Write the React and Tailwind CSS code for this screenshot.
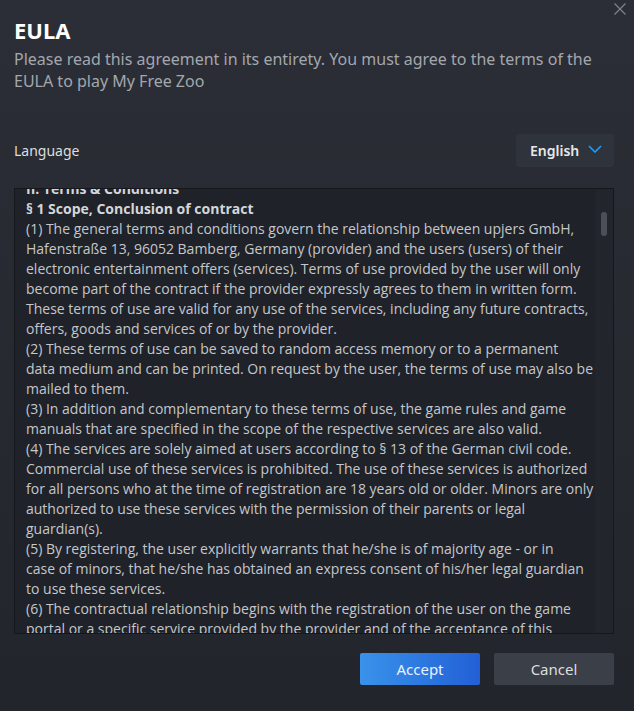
const TERMS = [
  { bold: true, lines: ['II. Terms & Conditions'] },
  { bold: true, lines: ['§ 1 Scope, Conclusion of contract'] },
  {
    lines: [
      '(1) The general terms and conditions govern the relationship between upjers GmbH,',
      'Hafenstraße 13, 96052 Bamberg, Germany (provider) and the users (users) of their',
      'electronic entertainment offers (services). Terms of use provided by the user will only',
      'become part of the contract if the provider expressly agrees to them in written form.',
      'These terms of use are valid for any use of the services, including any future contracts,',
      'offers, goods and services of or by the provider.',
    ],
  },
  {
    lines: [
      '(2) These terms of use can be saved to random access memory or to a permanent',
      'data medium and can be printed. On request by the user, the terms of use may also be',
      'mailed to them.',
    ],
  },
  {
    lines: [
      '(3) In addition and complementary to these terms of use, the game rules and game',
      'manuals that are specified in the scope of the respective services are also valid.',
    ],
  },
  {
    lines: [
      '(4) The services are solely aimed at users according to § 13 of the German civil code.',
      'Commercial use of these services is prohibited. The use of these services is authorized',
      'for all persons who at the time of registration are 18 years old or older. Minors are only',
      'authorized to use these services with the permission of their parents or legal',
      'guardian(s).',
    ],
  },
  {
    lines: [
      '(5) By registering, the user explicitly warrants that he/she is of majority age - or in',
      'case of minors, that he/she has obtained an express consent of his/her legal guardian',
      'to use these services.',
    ],
  },
  {
    lines: [
      '(6) The contractual relationship begins with the registration of the user on the game',
      'portal or a specific service provided by the provider and of the acceptance of this',
      'EULA. The user has no right to be admitted to the services.',
    ],
  },
]

export default function App() {
  return (
    <div className="relative w-[634px] h-[711px] overflow-hidden bg-gradient-to-b from-[#2b2e36] to-[#22252b] font-['Noto_Sans',sans-serif]">
      {/* close */}
      <button className="absolute right-[8px] top-[3px] flex">
        <svg width="12" height="12" viewBox="0 0 12 12" fill="none">
          <path d="M0.5 0.5 L11.5 11.5 M11.5 0.5 L0.5 11.5" stroke="#7d8188" strokeWidth="1.3" />
        </svg>
      </button>

      <div className="flex flex-col px-[14px] pr-[20px]">
        {/* header */}
        <h1 className="mt-[16px] text-[22px] leading-[28px] font-bold text-white">EULA</h1>
        <p className="mt-[4px] text-[16px] leading-[22px] text-[#a3a7ae]">
          Please read this agreement in its entirety. You must agree to the terms of the
          <br />
          EULA to play My Free Zoo
        </p>

        {/* language row */}
        <div className="mt-[42px] flex items-center justify-between">
          <span className="text-[14px] text-[#dcdedf]">Language</span>
          <button className="flex items-center gap-[9px] h-[33px] w-[98px] pl-[14px] rounded-[3px] bg-[#2f333c] text-[14px] font-semibold text-[#e6e8ea]">
            English
            <svg width="14" height="8" viewBox="0 0 14 8" fill="none" className="mb-[3px]">
              <polyline points="1,1 7,7 13,1" stroke="#1a9fff" strokeWidth="1.6" />
            </svg>
          </button>
        </div>

        {/* terms box */}
        <div className="relative mt-[21px] h-[446px] overflow-hidden border border-[#15171b] bg-[#1f2229]">
          <div className="-mt-[10px] pl-[11px] pr-[20px] font-['Open_Sans',sans-serif] text-[14px] leading-[20px] text-[#c5c7cb] whitespace-nowrap">
            {TERMS.map((p, i) => (
              <div key={i} className={p.bold ? 'font-bold text-[#d4d6d9]' : ''}>
                {p.lines.map((l, j) => (
                  <div key={j}>{l}</div>
                ))}
              </div>
            ))}
          </div>
          {/* scrollbar */}
          <div className="absolute right-0 top-0 bottom-0 w-[18px] bg-[#22252c]">
            <div className="mx-auto mt-[23px] w-[6px] h-[24px] rounded-full bg-[#4b4f57]" />
          </div>
        </div>

        {/* actions */}
        <div className="mt-[19px] flex justify-end gap-[14px]">
          <button className="w-[120px] h-[32px] rounded-[2px] bg-gradient-to-r from-[#3a92ea] to-[#235fd6] text-[15px] text-[#e9f1ff]">
            Accept
          </button>
          <button className="w-[120px] h-[32px] rounded-[2px] bg-[#3b3f48] text-[15px] text-[#dcdedf]">
            Cancel
          </button>
        </div>
      </div>
    </div>
  )
}
